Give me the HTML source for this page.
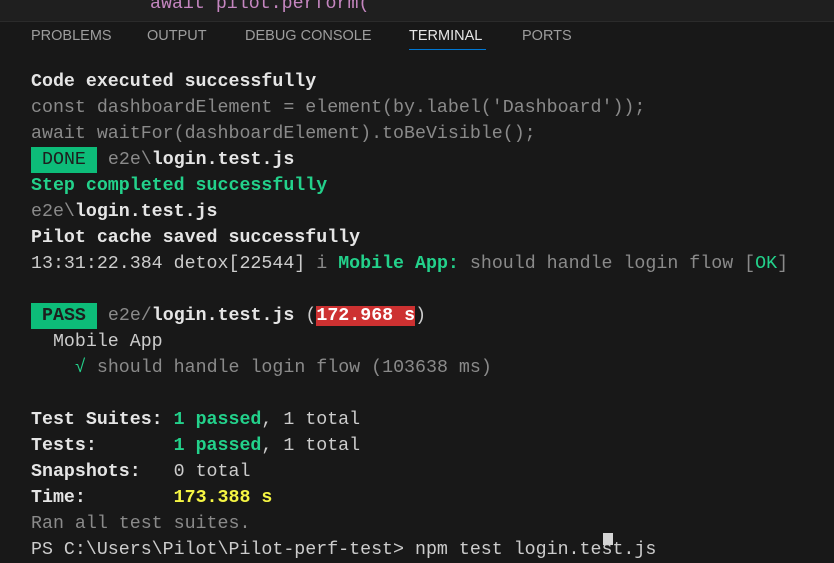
<!DOCTYPE html>
<html><head><meta charset="utf-8"><style>
*{margin:0;padding:0;box-sizing:border-box}
body{width:834px;height:543px;background:#181818;overflow:hidden;position:relative;font-family:"Liberation Mono",monospace}
.top{position:absolute;left:0;top:0;width:834px;height:22px;background:#1f1f1f;border-bottom:1px solid #2b2b2b;overflow:hidden}
.top span{position:absolute;left:150px;top:-6px;font-size:18.3px;color:#c586c0}
.tabs{position:absolute;top:28px;left:0;font-family:"Liberation Sans",sans-serif;font-size:14.5px;color:#9d9d9d}
.tab{position:absolute;top:0;white-space:nowrap}
.act{color:#e7e7e7}
.ul{position:absolute;left:409px;top:49px;width:77px;height:1px;background:#0078d4}
.term{position:absolute;left:31px;top:69px;font-size:18.3px;line-height:26px;color:#cccccc;white-space:pre}
.b{font-weight:bold;color:#e5e5e5}
.g{color:#23d18b}
.gb{color:#23d18b;font-weight:bold}
.d{color:#8a8a8a}
.y{color:#f5f543;font-weight:bold}
.badge{background:#0dbc79;color:#1e1e1e;padding:0 11px;display:inline-block;height:26px;line-height:26px;vertical-align:top}
.red{background:#cd3131;color:#fff;font-weight:bold}
.cursor{position:absolute;left:603px;top:533px;width:10px;height:12px;background:#d4d4d4}
</style></head><body>
<div class="top"><span>await pilot.perform(</span></div>
<div class="tabs">
<div class="tab" style="left:31px">PROBLEMS</div>
<div class="tab" style="left:147px">OUTPUT</div>
<div class="tab" style="left:245px">DEBUG CONSOLE</div>
<div class="tab act" style="left:409px">TERMINAL</div>
<div class="tab" style="left:522px">PORTS</div>
</div>
<div class="ul"></div>
<div class="term"><span class="b">Code executed successfully</span>
<span class="d">const dashboardElement = element(by.label('Dashboard'));</span>
<span class="d">await waitFor(dashboardElement).toBeVisible();</span>
<span class="badge">DONE</span> <span class="d">e2e\</span><span class="b">login.test.js</span>
<span class="gb">Step completed successfully</span>
<span class="d">e2e\</span><span class="b">login.test.js</span>
<span class="b">Pilot cache saved successfully</span>
13:31:22.384 detox[22544] <span class="d">i</span> <span class="gb">Mobile App:</span> <span class="d">should handle login flow [</span><span class="g">OK</span><span class="d">]</span>

<span class="badge b" style="color:#1e1e1e">PASS</span> <span class="d">e2e/</span><span class="b">login.test.js</span> (<span class="red">172.968 s</span>)
  Mobile App
    <span class="g">√</span> <span class="d">should handle login flow (103638 ms)</span>

<span class="b">Test Suites: </span><span class="gb">1 passed</span>, 1 total
<span class="b">Tests:       </span><span class="gb">1 passed</span>, 1 total
<span class="b">Snapshots:   </span>0 total
<span class="b">Time:        </span><span class="y">173.388 s</span>
<span class="d">Ran all test suites.</span>
PS C:\Users\Pilot\Pilot-perf-test&gt; npm test login.test.js</div>
<div class="cursor"></div>
</body></html>
